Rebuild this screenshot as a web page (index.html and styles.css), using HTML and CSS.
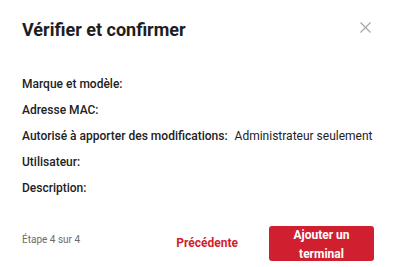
FILE: index.html
```html
<!DOCTYPE html>
<html lang="fr">
<head>
<meta charset="utf-8">
<link rel="stylesheet" href="styles.css">
</head>
<body>
<div class="modal">
  <div class="modal-header">
    <h1 class="modal-title">Vérifier et confirmer</h1>
    <button class="close-btn" aria-label="Fermer">
      <svg width="11" height="11" viewBox="0 0 11 11"><path d="M0.5 0.5L10.5 10.5M10.5 0.5L0.5 10.5" stroke="#a6a6a6" stroke-width="1.2" fill="none"/></svg>
    </button>
  </div>
  <div class="details">
    <div class="row"><span class="label">Marque et modèle:</span></div>
    <div class="row"><span class="label">Adresse MAC:</span></div>
    <div class="row"><span class="label">Autorisé à apporter des modifications:</span><span class="value">Administrateur seulement</span></div>
    <div class="row"><span class="label">Utilisateur:</span></div>
    <div class="row"><span class="label">Description:</span></div>
  </div>
  <div class="modal-footer">
    <span class="step">Étape 4 sur 4</span>
    <div class="actions">
      <button class="btn-link">Précédente</button>
      <button class="btn-primary">Ajouter un terminal</button>
    </div>
  </div>
</div>
</body>
</html>
```
FILE: styles.css
```css
html, body {
  margin: 0;
  padding: 0;
  background: #ffffff;
}
body {
  font-family: Roboto, "Noto Sans", sans-serif;
  color: #222222;
}
.modal {
  width: 396px;
  height: 267px;
  box-sizing: border-box;
  padding: 18.3px 22px 0 22px;
}
.modal-header {
  display: flex;
  justify-content: space-between;
  align-items: flex-start;
  height: 24px;
}
.modal-title {
  margin: 0;
  font-size: 18px;
  line-height: 24px;
  font-weight: 700;
  color: #1e1e1e;
}
.close-btn {
  border: none;
  background: none;
  padding: 0;
  margin-top: 4.2px;
  margin-right: 3px;
  width: 11px;
  height: 11px;
  display: flex;
}
.details {
  margin-top: 28.9px;
  display: flex;
  flex-direction: column;
}
.row {
  height: 26px;
  line-height: 26px;
  font-size: 12px;
  white-space: nowrap;
}
.label {
  font-weight: 500;
  color: #222222;
}
.value {
  font-weight: 400;
  margin-left: 7px;
  color: #222222;
}
.modal-footer {
  margin-top: 24.8px;
  display: flex;
  align-items: center;
  justify-content: space-between;
}
.step {
  font-size: 10px;
  line-height: 11.7px;
  color: #6b6b6b;
  align-self: flex-start;
  margin-top: 7.7px;
}
.actions {
  display: flex;
  align-items: center;
}
.btn-link {
  border: none;
  background: none;
  font-family: inherit;
  font-size: 12px;
  font-weight: 700;
  color: #d01f2e;
  padding: 0;
  margin-right: 31px;
}
.btn-primary {
  border: none;
  background: #d01f2e;
  color: #ffffff;
  font-family: inherit;
  font-size: 12px;
  font-weight: 700;
  line-height: 19px;
  width: 105px;
  height: 35px;
  border-radius: 3px;
  padding: 0 16px;
}
```
